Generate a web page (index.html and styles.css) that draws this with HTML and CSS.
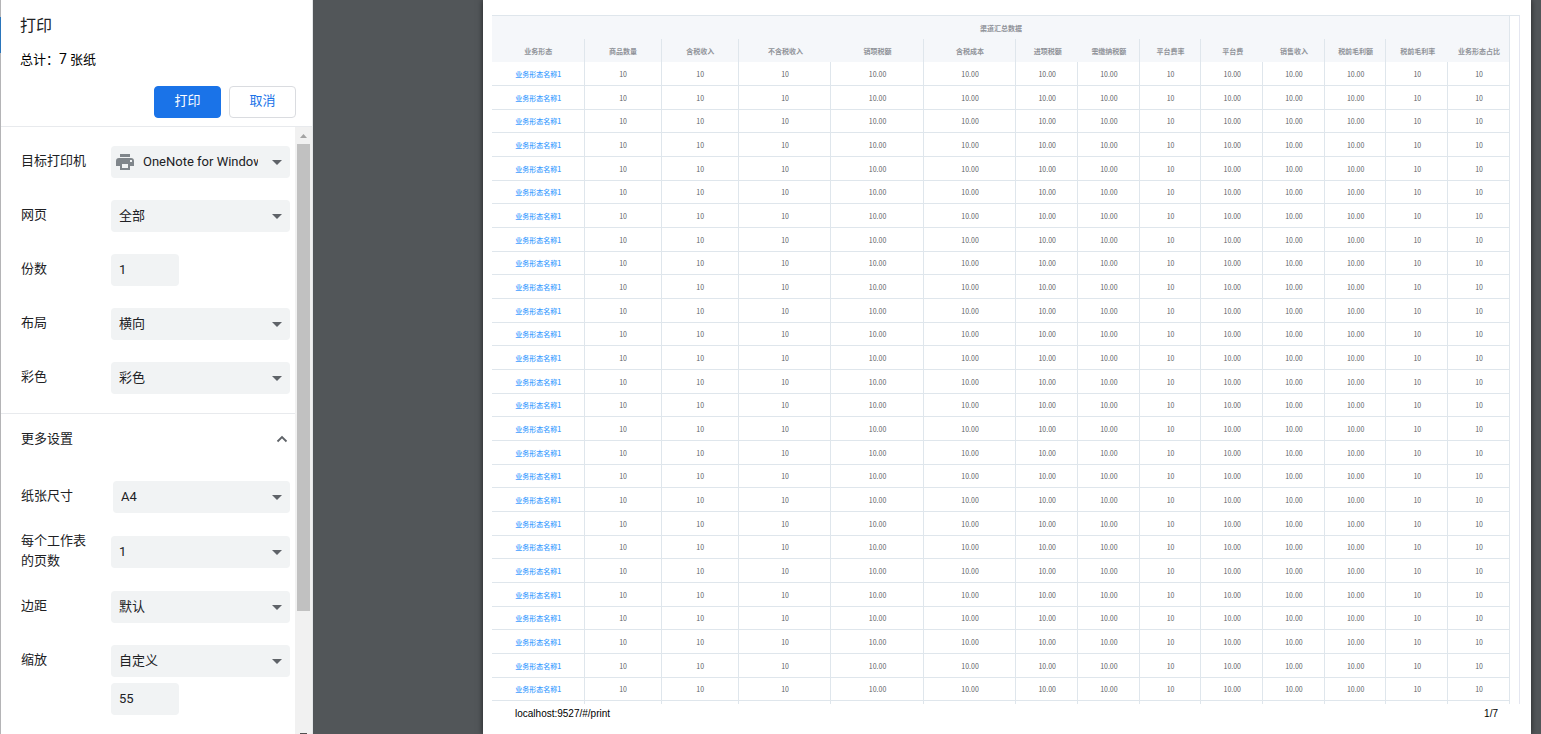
FILE: index.html
```html
<!DOCTYPE html>
<html lang="zh-CN">
<head>
<meta charset="utf-8">
<title>打印</title>
<link rel="stylesheet" href="styles.css">
</head>
<body>
<div class="edge"></div>
<aside class="sidebar">
  <header class="head">
    <h1 class="title">打印</h1>
    <p class="total">总计：<span class="count">7</span> 张纸</p>
    <div class="actions">
      <button class="btn btn-primary" type="button">打印</button>
      <button class="btn" type="button">取消</button>
    </div>
  </header>
  <div class="scroller">
    <form class="settings">
      <div class="group">
        <div class="row">
          <label class="label" for="dest">目标打印机</label>
          <div class="control dest">
            <svg class="printer" viewBox="0 0 18 18" width="18" height="18"><path fill="#80868b" fill-rule="evenodd" d="M4 1h10v3H4zM3 5h12a3 3 0 0 1 3 3v5h-4v4H4v-4H0V8a3 3 0 0 1 3-3zM6 11v4h6v-4zM14 7v2h2V7z"/></svg>
            <select class="field with-icon" id="dest"><option>OneNote for Windows 10</option></select>
          </div>
        </div>
        <div class="row">
          <label class="label" for="pages">网页</label>
          <div class="control"><select class="field" id="pages"><option>全部</option></select></div>
        </div>
        <div class="row">
          <label class="label" for="copies">份数</label>
          <div class="control"><input class="field small" id="copies" type="text" value="1"></div>
        </div>
        <div class="row">
          <label class="label" for="layout">布局</label>
          <div class="control"><select class="field" id="layout"><option>横向</option></select></div>
        </div>
        <div class="row">
          <label class="label" for="color">彩色</label>
          <div class="control"><select class="field" id="color"><option>彩色</option></select></div>
        </div>
      </div>
      <button class="more" type="button">
        <span>更多设置</span>
        <svg viewBox="0 0 12 8" width="12" height="8"><path d="M1.500 6.500 6 2l4.500 4.500" fill="none" stroke="#5f6368" stroke-width="1.800"/></svg>
      </button>
      <div class="group-more">
        <div class="row">
          <label class="label" for="paper">纸张尺寸</label>
          <div class="control narrow"><select class="field" id="paper"><option>A4</option></select></div>
        </div>
        <div class="row tall">
          <label class="label" for="sheet">每个工作表的页数</label>
          <div class="control"><select class="field" id="sheet"><option>1</option></select></div>
        </div>
        <div class="row">
          <label class="label" for="margin">边距</label>
          <div class="control"><select class="field" id="margin"><option>默认</option></select></div>
        </div>
        <div class="row">
          <label class="label" for="scale">缩放</label>
          <div class="control"><select class="field" id="scale"><option>自定义</option></select></div>
        </div>
        <div class="extra"><input class="field small" type="text" value="55" aria-label="缩放"></div>
      </div>
    </form>
    <div class="bar">
      <svg class="bar-up" viewBox="0 0 7 4" width="7" height="4"><path d="M0 4 3.500 0 7 4z" fill="#a3a3a3"/></svg>
      <div class="thumb"></div>
      <div class="bar-down"></div>
    </div>
  </div>
</aside>
<main class="preview">
  <section class="sheet">
    <div class="frame">
      <table class="data">
        <colgroup>
          <col class="w-l"><col class="w-m"><col class="w-m"><col class="w-l"><col class="w-l"><col class="w-l"><col class="w-s"><col class="w-s"><col class="w-s"><col class="w-s"><col class="w-s"><col class="w-s"><col class="w-s"><col class="w-s">
        </colgroup>
        <thead>
          <tr><th class="line" colspan="14">渠道汇总数据</th></tr>
          <tr><th class="line">业务形态</th><th class="line">商品数量</th><th class="line">含税收入</th><th>不含税收入</th><th class="line">销项税额</th><th class="line">含税成本</th><th>进项税额</th><th class="line">需缴纳税额</th><th class="line">平台费率</th><th>平台费</th><th class="line">销售收入</th><th class="line">税前毛利额</th><th>税前毛利率</th><th class="line">业务形态占比</th></tr>
        </thead>
        <tbody id="rows"></tbody>
      </table>
    </div>
    <footer class="foot"><span>localhost:9527/#/print</span><span>1/7</span></footer>
  </section>
</main>
<script src="rows.js"></script>
</body>
</html>
```
FILE: rows.js
```js
const values = ['10', '10', '10', '10.00', '10.00', '10.00', '10.00', '10', '10.00', '10.00', '10.00', '10', '10'];
const body = document.getElementById('rows');
const cells = values.map(v => `<td>${v}</td>`).join('');
let html = '';
for (let i = 0; i < 27; i++) {
  html += `<tr><td><a class="name" href="#">业务形态名称1</a></td>${cells}</tr>`;
}
// The next row starts on this sheet and is cut by the page break.
html += `<tr class="cut">${'<td></td>'.repeat(14)}</tr>`;
body.innerHTML = html;
```
FILE: styles.css
```css
* { box-sizing: border-box; }

body {
  margin: 0;
  display: flex;
  height: 100vh;
  overflow: hidden;
  background: #525659;
  color: #202124;
  font: 13px/20px Roboto, "Noto Sans CJK SC", sans-serif;
}

.edge {
  flex: 0 0 1px;
  background: linear-gradient(#b4b4b6 17px, #2a75bb 17px, #2a75bb 53px, #b4b4b6 53px);
}

.sidebar {
  flex: 0 0 312px;
  display: flex;
  flex-direction: column;
  border-right: 1px solid #e4e6e8;
  background: #fff;
}

.head {
  padding: 14px 16px 8px 19px;
  border-bottom: 1px solid #e8eaed;
}
.title { margin: 0; font-size: 16px; line-height: 24px; font-weight: 400; }
.total { margin: 11px 0 16px; color: #000; }
.count { font-size: 14px; }
.actions { display: flex; justify-content: flex-end; gap: 8px; }
.btn {
  width: 67px;
  height: 32px;
  padding: 0 0 2px;
  border: 1px solid #dadce0;
  border-radius: 4px;
  background: #fff;
  color: #1a73e8;
  font: inherit;
}
.btn-primary { background: #1a73e8; border-color: #1a73e8; color: #fff; }

.scroller { flex: 1; min-height: 0; display: flex; overflow: hidden; }
.settings { flex: 1; min-width: 0; }
.group { padding: 8px 0; border-bottom: 1px solid #e8eaed; }
.row { display: flex; align-items: center; height: 54px; padding: 0 5px 0 20px; }
.tall { height: 56px; }
.label { flex: 0 0 90px; padding: 0 24px 2px 0; }
.control { flex: 1; min-width: 0; position: relative; }
.narrow { padding-left: 2px; }
.field {
  display: block;
  width: 100%;
  height: 32px;
  padding: 0 32px 0 8px;
  border: 0;
  border-radius: 4px;
  appearance: none;
  background: #f1f3f4 url("data:image/svg+xml,%3Csvg xmlns='http://www.w3.org/2000/svg' width='10' height='5'%3E%3Cpath d='M0 0h10L5 5z' fill='%235f6368'/%3E%3C/svg%3E") no-repeat right 8px top 14px;
  color: #202124;
  font: inherit;
}
.small { width: 68px; padding: 0 8px 2px; background-image: none; }
.with-icon { padding-left: 32px; text-overflow: clip; }
.printer { position: absolute; left: 5px; top: 7px; }
.more {
  display: flex;
  align-items: center;
  justify-content: space-between;
  width: 100%;
  height: 49px;
  padding: 0 7px 0 20px;
  border: 0;
  background: none;
  color: inherit;
  font: inherit;
}
.group-more { padding-top: 7px; }
.extra { margin-top: -5px; padding-left: 110px; }

.bar { flex: 0 0 17px; display: flex; flex-direction: column; align-items: center; background: #f1f1f1; }
.bar-up { margin: 7px 0 6px; flex: none; }
.thumb { width: 13px; height: 77%; background: #c1c1c1; }
.bar-down { width: 7px; height: 1px; margin-top: auto; background: #505050; }

.preview { flex: 1; min-width: 0; padding: 0 10px 0 170px; }
.sheet {
  height: 100%;
  padding: 15px 11px 0 9px;
  background: #fff;
  box-shadow: 0 0 6px rgba(0, 0, 0, .6);
}
.frame { padding-right: 9px; border-top: 1px solid #dfe6ec; border-right: 1px solid #e4e6f0; }

.data {
  width: 100%;
  table-layout: fixed;
  border-collapse: separate;
  border-spacing: 0;
  color: #606266;
  font: 7px/8px "Noto Sans CJK SC", sans-serif;
  text-align: center;
}
.w-l { width: 60px; }
.w-m { width: 50px; }
.w-s { width: 40px; }
.data th { height: 23px; padding: 1px 0 0 1px; background: #f5f7fa; color: #909399; font-weight: 700; white-space: nowrap; }
.data .line { border-right: 1px solid #dfe6ec; }
.data td { height: 24px; padding: 0 0 0 1px; border-right: 1px solid #dfe6ec; border-bottom: 1px solid #dfe6ec; }
.data tr:nth-child(3n) td { height: 23px; }
.data .cut td { height: 3px; border-bottom: 0; }
.name { color: #409eff; font-weight: 500; text-decoration: none; }

.foot {
  display: flex;
  justify-content: space-between;
  padding: 4px 22px 0 23px;
  color: #000;
  font: 10px/12px "Liberation Sans", sans-serif;
}
</style>
```
